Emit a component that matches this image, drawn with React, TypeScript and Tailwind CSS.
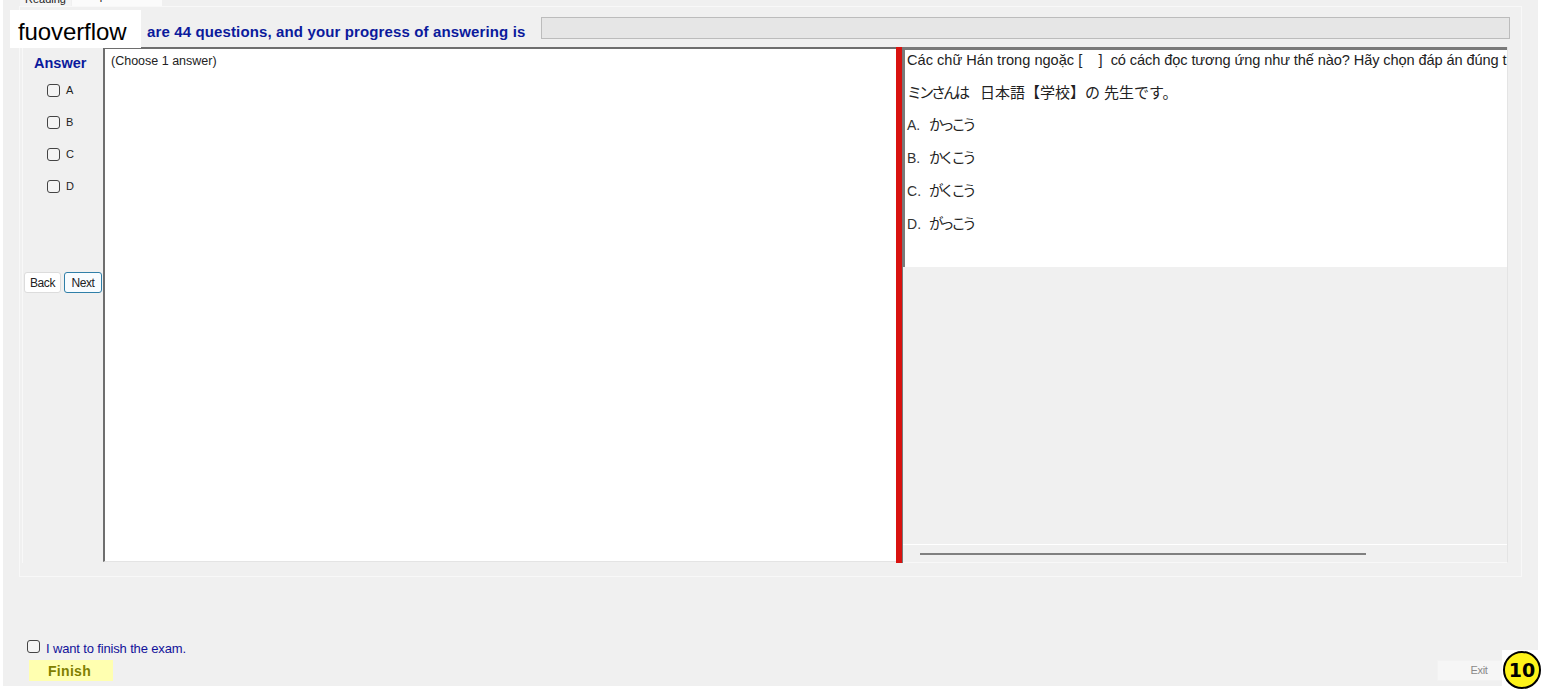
const sans = 'font-["Liberation_Sans",Arial,"Noto_Sans_CJK_JP",sans-serif]';

function Choice({ label, kana }: { label: string; kana: string }) {
  return (
    <div className="flex h-[33px] items-center text-[14.5px] text-[#222]">
      <span className="w-[22px] text-[14px] text-[#333]">{label}.</span>
      <span className="tracking-[-3.4px]">{kana}</span>
    </div>
  );
}

function AnswerBox({ label }: { label: string }) {
  return (
    <div className="flex h-[32px] items-start pl-[24px]">
      <span className="mt-[1px] h-[13px] w-[13px] rounded-[3px] border border-[#444] bg-[#f4f4f4]" />
      <span className="ml-[6px] mt-[1px] text-[11px] leading-[13px] text-[#222]">{label}</span>
    </div>
  );
}

export default function App() {
  return (
    <div className={`relative h-[690px] w-[1542px] overflow-hidden bg-white pb-[4px] pl-[3px] pr-[4px] ${sans}`}>
      <div className="flex h-[686px] flex-col bg-[#f0f0f0]">
        {/* tabs */}
        <div className="flex h-[6px] items-end pl-[17px]">
          <div className="flex h-[6px] w-[51px] justify-center overflow-hidden bg-[#f4f4f4] text-[11px] leading-[0px] text-[#222]">
            <span className="-mt-[1px]">Reading</span>
          </div>
          <div className="ml-[1px] flex h-[6px] w-[90px] justify-center overflow-hidden bg-[#fbfbfb] text-[11px] leading-[0px] text-[#222]">
            <span className="-mt-[4px]">Multiple Choices</span>
          </div>
        </div>

        {/* tab panel */}
        <div className="ml-[16px] flex h-[571px] w-[1503px] flex-col border border-[#f8f8f8] pl-[2px]">
          <div className="flex h-[40px] items-center">
            <p className="ml-[125px] w-[394px] whitespace-nowrap pt-[11px] text-[15px] font-bold tracking-[0.13px] text-[#0b1a9c]">
              are 44 questions, and your progress of answering is
            </p>
            <div className="mt-[2px] h-[22px] w-[969px] border border-[#bcbcbc] bg-[#e6e6e6]" />
          </div>

          <div className="flex h-[516px]">
            {/* answer column */}
            <div className="flex w-[81px] flex-col border-l border-[#f8f8f8]">
              <p className="mt-[6px] pl-[11px] text-[14.5px] font-bold leading-[20px] text-[#0b1a9c]">Answer</p>
              <div className="mt-[10px]">
                <AnswerBox label="A" />
                <AnswerBox label="B" />
                <AnswerBox label="C" />
                <AnswerBox label="D" />
              </div>
              <div className="ml-[1px] mt-[61px] flex gap-[3px]">
                <button className="h-[21px] w-[37px] rounded-[3px] border border-[#dcdcdc] bg-white text-[12px] tracking-[-0.4px] text-[#222]">Back</button>
                <button className="h-[21px] w-[38px] rounded-[3px] border border-[#2f7fa8] bg-[#f8fcff] text-[12px] tracking-[-0.4px] text-[#222]">Next</button>
              </div>
            </div>

            {/* question pane */}
            <div className="h-[515px] w-[793px] border-b border-l-2 border-t-2 border-[#6e6e6e] border-b-[#e4e4e4] bg-white pl-[6px] pt-[5px]">
              <p className="text-[12.5px] leading-[15px] text-[#222]">(Choose 1 answer)</p>
            </div>

            {/* splitter */}
            <div className="h-[516px] w-[7px] border-r border-[#777] bg-[#d9120f]" />

            {/* passage pane */}
            <div className="flex w-[605px] flex-col border-b border-r border-[#e4e4e4] border-b-[#f8f8f8]">
              <div className="h-[220px] overflow-hidden border-l-2 border-t-[3px] border-[#7a7a7a] bg-white pl-[2px]">
                <div className="h-[19px] w-[640px] whitespace-nowrap pt-[1px] text-[14.6px] leading-[18px] text-[#222]">
                  Các chữ Hán trong ngoặc [&nbsp;&nbsp;&nbsp;&nbsp;] &nbsp;<span className="tracking-[-0.1px]">có cách đọc tương ứng như thế nào? Hãy chọn đáp án đúng t</span>
                </div>
                <div className="flex h-[40px] items-center pt-[9px] text-[15px] text-[#222]">
                  <span className="w-[73px] tracking-[-3px]">ミンさんは</span>
                  <span className="w-[124px]">日本語【学校】の</span>
                  <span>先生です。</span>
                </div>
                <Choice label="A" kana="かっこう" />
                <Choice label="B" kana="かくこう" />
                <Choice label="C" kana="がくこう" />
                <Choice label="D" kana="がっこう" />
              </div>
              <div className="flex-1" />
              <div className="flex h-[18px] items-center border-t border-white pl-[17px] pt-[1px]">
                <div className="h-[2px] w-[446px] bg-[#808080]" />
              </div>
            </div>
          </div>
        </div>

        {/* footer */}
        <div className="mt-[64px] flex items-start pl-[24px]">
          <span className="-mt-[1px] h-[13px] w-[13px] rounded-[3px] border border-[#444] bg-[#f4f4f4]" />
          <span className="ml-[6px] text-[13px] leading-[15px] tracking-[-0.15px] text-[#12129a]">I want to finish the exam.</span>
        </div>
        <div className="mt-[4px] flex items-start justify-between pl-[26px] pr-[17px]">
          <button className="h-[21px] w-[84px] bg-[#ffffb0] pr-[3px] pt-[1px] text-center text-[14px] font-bold tracking-[0.3px] text-[#808000]">Finish</button>
          <button className="h-[21px] w-[84px] border border-[#f2f2f2] bg-[#f6f6f6] text-[11px] tracking-[-0.3px] text-[#8a8a8a]">Exit</button>
        </div>
      </div>

      {/* watermark */}
      <div className="absolute left-[10px] top-[10px] flex h-[38px] w-[131px] items-center bg-white pl-[8px] pt-[5px] text-[24px] tracking-[-0.1px] text-black">fuoverflow</div>

      {/* timer badge */}
      <div className="absolute left-[1502px] top-[650px] flex h-[40px] w-[40px] items-center justify-center bg-white">
        <div className="flex h-[38px] w-[38px] items-center justify-center rounded-full border-2 border-black bg-[#fdf21a] font-['DejaVu_Sans'] text-[19px] font-bold text-black">10</div>
      </div>
    </div>
  );
}
